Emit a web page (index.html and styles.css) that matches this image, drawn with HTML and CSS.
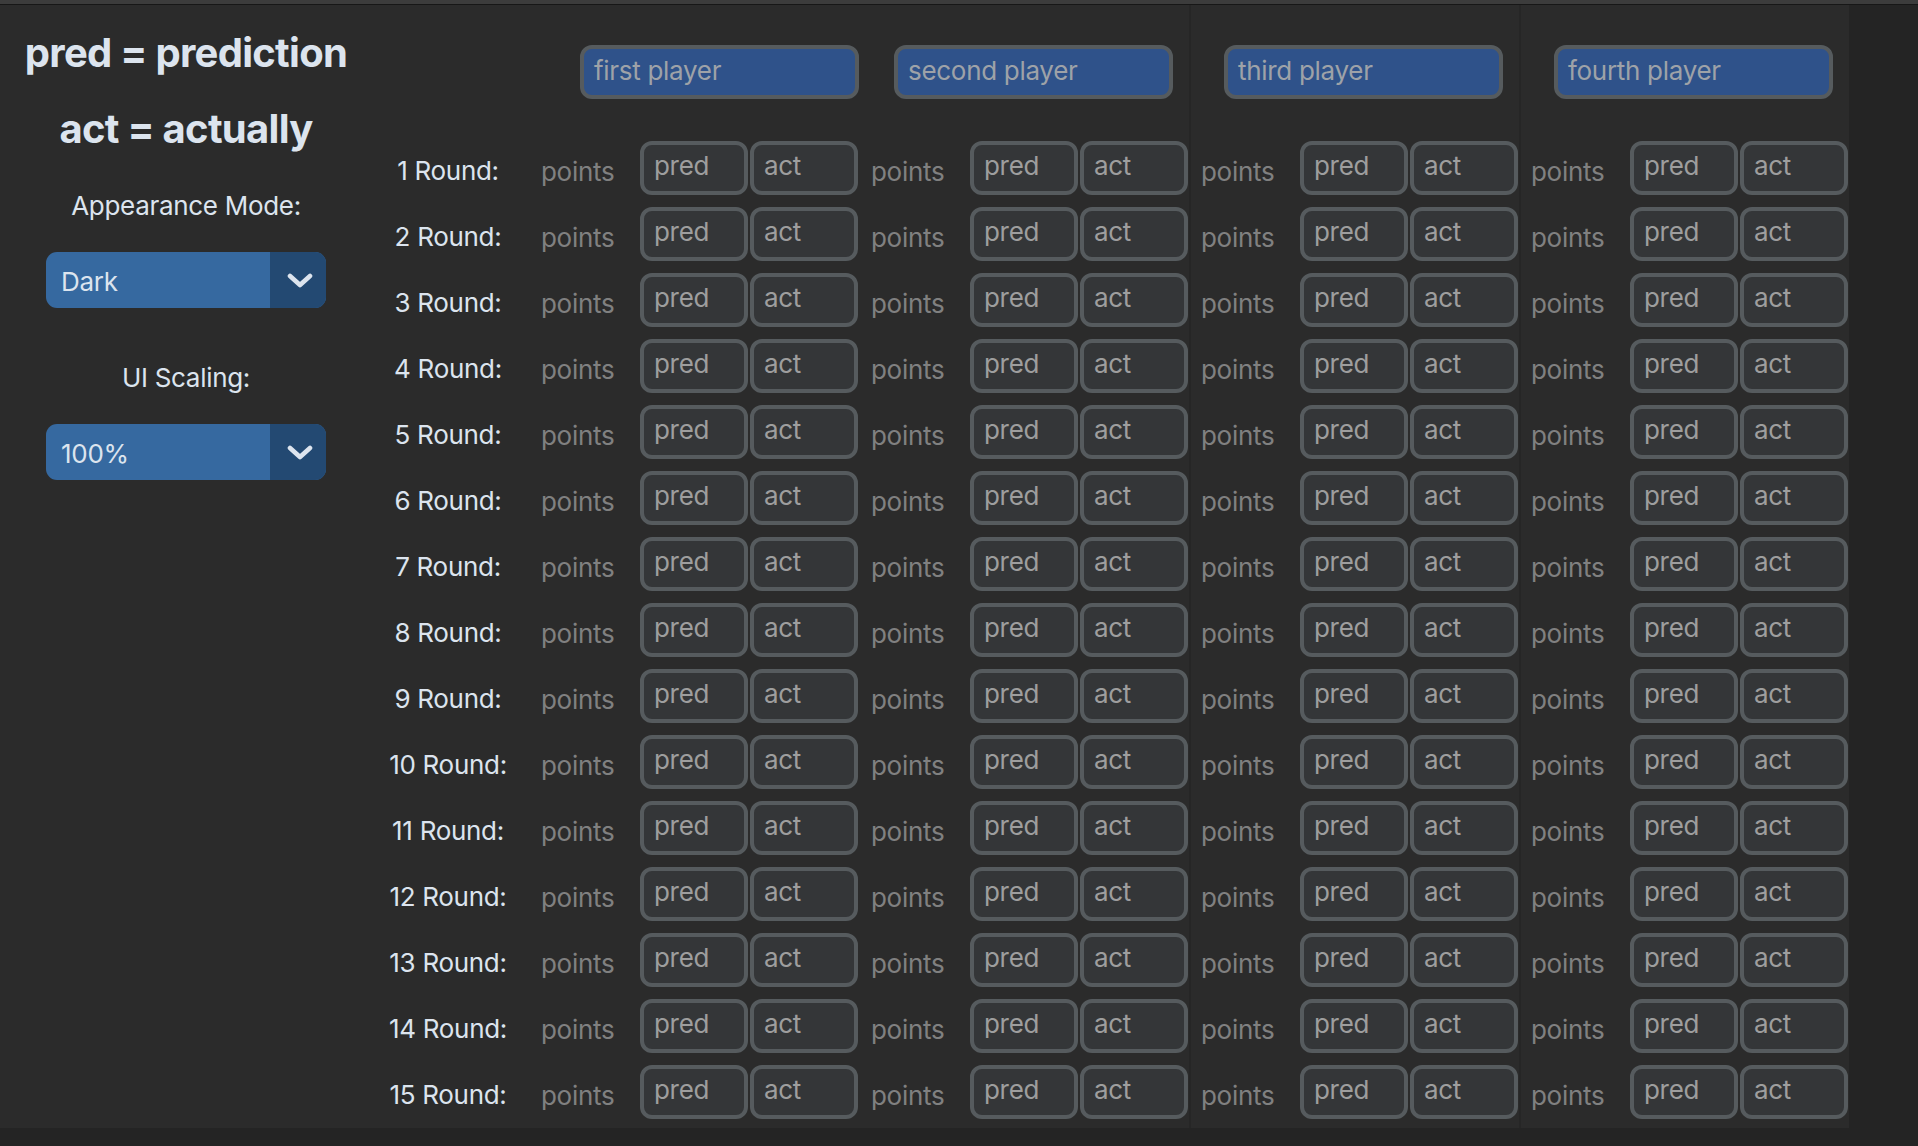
FILE: index.html
```html
<!DOCTYPE html>
<html lang="en">
<head>
<meta charset="utf-8">
<title>Score sheet</title>
<link rel="stylesheet" href="styles.css">
</head>
<body>
<div class="topbar"></div>
<div class="window">
  <div class="main">
    <aside class="side">
      <div class="title t1">pred = prediction</div>
      <div class="title t2">act = actually</div>
      <div class="lbl lbl-first">Appearance Mode:</div>
      <div class="menu">
        <div class="menu-txt">Dark</div>
        <div class="menu-btn"><svg class="chev" viewBox="0 0 26 15" width="26" height="15"><polyline points="3,3 13,12 23,3"/></svg></div>
      </div>
      <div class="lbl lbl-second">UI Scaling:</div>
      <div class="menu">
        <div class="menu-txt">100%</div>
        <div class="menu-btn"><svg class="chev" viewBox="0 0 26 15" width="26" height="15"><polyline points="3,3 13,12 23,3"/></svg></div>
      </div>
    </aside>

    <div class="labels">
      <div class="rlabel">1 Round:</div>
      <div class="rlabel">2 Round:</div>
      <div class="rlabel">3 Round:</div>
      <div class="rlabel">4 Round:</div>
      <div class="rlabel">5 Round:</div>
      <div class="rlabel">6 Round:</div>
      <div class="rlabel">7 Round:</div>
      <div class="rlabel">8 Round:</div>
      <div class="rlabel">9 Round:</div>
      <div class="rlabel">10 Round:</div>
      <div class="rlabel">11 Round:</div>
      <div class="rlabel">12 Round:</div>
      <div class="rlabel">13 Round:</div>
      <div class="rlabel">14 Round:</div>
      <div class="rlabel">15 Round:</div>
    </div>

    <section class="pcol">
      <div class="phead"><div class="pentry pentry-first">first player</div></div>
      <div class="rows">
        <div class="prow"><span class="pts">points</span><div class="cell">pred</div><div class="cell">act</div></div>
        <div class="prow"><span class="pts">points</span><div class="cell">pred</div><div class="cell">act</div></div>
        <div class="prow"><span class="pts">points</span><div class="cell">pred</div><div class="cell">act</div></div>
        <div class="prow"><span class="pts">points</span><div class="cell">pred</div><div class="cell">act</div></div>
        <div class="prow"><span class="pts">points</span><div class="cell">pred</div><div class="cell">act</div></div>
        <div class="prow"><span class="pts">points</span><div class="cell">pred</div><div class="cell">act</div></div>
        <div class="prow"><span class="pts">points</span><div class="cell">pred</div><div class="cell">act</div></div>
        <div class="prow"><span class="pts">points</span><div class="cell">pred</div><div class="cell">act</div></div>
        <div class="prow"><span class="pts">points</span><div class="cell">pred</div><div class="cell">act</div></div>
        <div class="prow"><span class="pts">points</span><div class="cell">pred</div><div class="cell">act</div></div>
        <div class="prow"><span class="pts">points</span><div class="cell">pred</div><div class="cell">act</div></div>
        <div class="prow"><span class="pts">points</span><div class="cell">pred</div><div class="cell">act</div></div>
        <div class="prow"><span class="pts">points</span><div class="cell">pred</div><div class="cell">act</div></div>
        <div class="prow"><span class="pts">points</span><div class="cell">pred</div><div class="cell">act</div></div>
        <div class="prow"><span class="pts">points</span><div class="cell">pred</div><div class="cell">act</div></div>
      </div>
    </section>

    <section class="pcol">
      <div class="phead"><div class="pentry">second player</div></div>
      <div class="rows">
        <div class="prow"><span class="pts">points</span><div class="cell">pred</div><div class="cell">act</div></div>
        <div class="prow"><span class="pts">points</span><div class="cell">pred</div><div class="cell">act</div></div>
        <div class="prow"><span class="pts">points</span><div class="cell">pred</div><div class="cell">act</div></div>
        <div class="prow"><span class="pts">points</span><div class="cell">pred</div><div class="cell">act</div></div>
        <div class="prow"><span class="pts">points</span><div class="cell">pred</div><div class="cell">act</div></div>
        <div class="prow"><span class="pts">points</span><div class="cell">pred</div><div class="cell">act</div></div>
        <div class="prow"><span class="pts">points</span><div class="cell">pred</div><div class="cell">act</div></div>
        <div class="prow"><span class="pts">points</span><div class="cell">pred</div><div class="cell">act</div></div>
        <div class="prow"><span class="pts">points</span><div class="cell">pred</div><div class="cell">act</div></div>
        <div class="prow"><span class="pts">points</span><div class="cell">pred</div><div class="cell">act</div></div>
        <div class="prow"><span class="pts">points</span><div class="cell">pred</div><div class="cell">act</div></div>
        <div class="prow"><span class="pts">points</span><div class="cell">pred</div><div class="cell">act</div></div>
        <div class="prow"><span class="pts">points</span><div class="cell">pred</div><div class="cell">act</div></div>
        <div class="prow"><span class="pts">points</span><div class="cell">pred</div><div class="cell">act</div></div>
        <div class="prow"><span class="pts">points</span><div class="cell">pred</div><div class="cell">act</div></div>
      </div>
    </section>

    <section class="pcol pcol-sep">
      <div class="phead"><div class="pentry">third player</div></div>
      <div class="rows">
        <div class="prow"><span class="pts">points</span><div class="cell">pred</div><div class="cell">act</div></div>
        <div class="prow"><span class="pts">points</span><div class="cell">pred</div><div class="cell">act</div></div>
        <div class="prow"><span class="pts">points</span><div class="cell">pred</div><div class="cell">act</div></div>
        <div class="prow"><span class="pts">points</span><div class="cell">pred</div><div class="cell">act</div></div>
        <div class="prow"><span class="pts">points</span><div class="cell">pred</div><div class="cell">act</div></div>
        <div class="prow"><span class="pts">points</span><div class="cell">pred</div><div class="cell">act</div></div>
        <div class="prow"><span class="pts">points</span><div class="cell">pred</div><div class="cell">act</div></div>
        <div class="prow"><span class="pts">points</span><div class="cell">pred</div><div class="cell">act</div></div>
        <div class="prow"><span class="pts">points</span><div class="cell">pred</div><div class="cell">act</div></div>
        <div class="prow"><span class="pts">points</span><div class="cell">pred</div><div class="cell">act</div></div>
        <div class="prow"><span class="pts">points</span><div class="cell">pred</div><div class="cell">act</div></div>
        <div class="prow"><span class="pts">points</span><div class="cell">pred</div><div class="cell">act</div></div>
        <div class="prow"><span class="pts">points</span><div class="cell">pred</div><div class="cell">act</div></div>
        <div class="prow"><span class="pts">points</span><div class="cell">pred</div><div class="cell">act</div></div>
        <div class="prow"><span class="pts">points</span><div class="cell">pred</div><div class="cell">act</div></div>
      </div>
    </section>

    <section class="pcol pcol-sep">
      <div class="phead"><div class="pentry">fourth player</div></div>
      <div class="rows">
        <div class="prow"><span class="pts">points</span><div class="cell">pred</div><div class="cell">act</div></div>
        <div class="prow"><span class="pts">points</span><div class="cell">pred</div><div class="cell">act</div></div>
        <div class="prow"><span class="pts">points</span><div class="cell">pred</div><div class="cell">act</div></div>
        <div class="prow"><span class="pts">points</span><div class="cell">pred</div><div class="cell">act</div></div>
        <div class="prow"><span class="pts">points</span><div class="cell">pred</div><div class="cell">act</div></div>
        <div class="prow"><span class="pts">points</span><div class="cell">pred</div><div class="cell">act</div></div>
        <div class="prow"><span class="pts">points</span><div class="cell">pred</div><div class="cell">act</div></div>
        <div class="prow"><span class="pts">points</span><div class="cell">pred</div><div class="cell">act</div></div>
        <div class="prow"><span class="pts">points</span><div class="cell">pred</div><div class="cell">act</div></div>
        <div class="prow"><span class="pts">points</span><div class="cell">pred</div><div class="cell">act</div></div>
        <div class="prow"><span class="pts">points</span><div class="cell">pred</div><div class="cell">act</div></div>
        <div class="prow"><span class="pts">points</span><div class="cell">pred</div><div class="cell">act</div></div>
        <div class="prow"><span class="pts">points</span><div class="cell">pred</div><div class="cell">act</div></div>
        <div class="prow"><span class="pts">points</span><div class="cell">pred</div><div class="cell">act</div></div>
        <div class="prow"><span class="pts">points</span><div class="cell">pred</div><div class="cell">act</div></div>
      </div>
    </section>
  </div>
</div>
</body>
</html>
```
FILE: styles.css
```css
html, body {
  margin: 0;
  padding: 0;
}

body {
  background: #242424;
  font-family: Inter, "Noto Sans", sans-serif;
  color: #dce4ee;
  font-size: 26px;
  line-height: 30px;
  letter-spacing: -0.3px;
  overflow: hidden;
}

.topbar {
  height: 4px;
  background: #3c3c3c;
  border-bottom: 1px solid #171717;
}

.window {
  display: flex;
}

.main {
  display: flex;
  width: 1849px;
  height: 1123px;
  background: #2b2b2b;
}

/* ---------- sidebar ---------- */
.side {
  width: 372px;
  flex: none;
  display: flex;
  flex-direction: column;
  align-items: center;
}

.title {
  font-size: 40px;
  line-height: 48px;
  font-weight: 700;
  letter-spacing: -0.72px;
  white-space: nowrap;
}

.t1 { margin-top: 23.5px; }
.t2 { margin-top: 28px; }

.lbl {
  white-space: nowrap;
}

.lbl-first { margin-top: 38px; }
.lbl-second { margin-top: 54.5px; }

.menu {
  margin-top: 31.5px;
  width: 280px;
  height: 56px;
  display: flex;
  border-radius: 11px;
  overflow: hidden;
  background: #3669a0;
}

.menu-txt {
  flex: 1;
  padding: 15px 0 0 15px;
}

.menu-btn {
  width: 56px;
  flex: none;
  background: #234972;
  display: flex;
  align-items: center;
  justify-content: center;
  padding-left: 4px;
  box-sizing: border-box;
}

.chev {
  display: block;
}

.chev polyline {
  fill: none;
  stroke: #dce4ee;
  stroke-width: 4.6;
  stroke-linecap: round;
  stroke-linejoin: round;
}

/* ---------- round labels ---------- */
.labels {
  width: 157px;
  flex: none;
  padding-top: 136px;
  box-sizing: border-box;
  display: flex;
  flex-direction: column;
  gap: 12px;
}

.rlabel {
  height: 54px;
  box-sizing: border-box;
  padding: 14.5px 5px 0 0;
  text-align: center;
  white-space: nowrap;
}

/* ---------- player columns ---------- */
.pcol {
  width: 330px;
  flex: none;
  display: flex;
  flex-direction: column;
}

.pcol-sep {
  box-shadow: inset 2px 0 0 #262626;
}

.phead {
  height: 136px;
  padding-top: 40px;
  box-sizing: border-box;
}

.pentry {
  width: 279px;
  height: 54px;
  margin-left: 35px;
  box-sizing: border-box;
  border: 4px solid #565b5e;
  border-radius: 12px;
  background: #2f528a;
  color: #9ea2a8;
  padding: 6.5px 0 0 10px;
  white-space: nowrap;
}

.pentry-first {
  margin-left: 51px;
}

.rows {
  display: flex;
  flex-direction: column;
  gap: 12px;
}

.prow {
  display: flex;
  height: 54px;
}

.pts {
  width: 111px;
  flex: none;
  box-sizing: border-box;
  padding: 16px 0 0 12px;
  color: #808080;
}

.cell {
  width: 108px;
  height: 54px;
  flex: none;
  box-sizing: border-box;
  border: 4px solid #565b5e;
  border-radius: 12px;
  background: #343638;
  color: #9e9e9e;
  padding: 6px 0 0 10px;
}

.cell + .cell {
  margin-left: 2px;
}
```
